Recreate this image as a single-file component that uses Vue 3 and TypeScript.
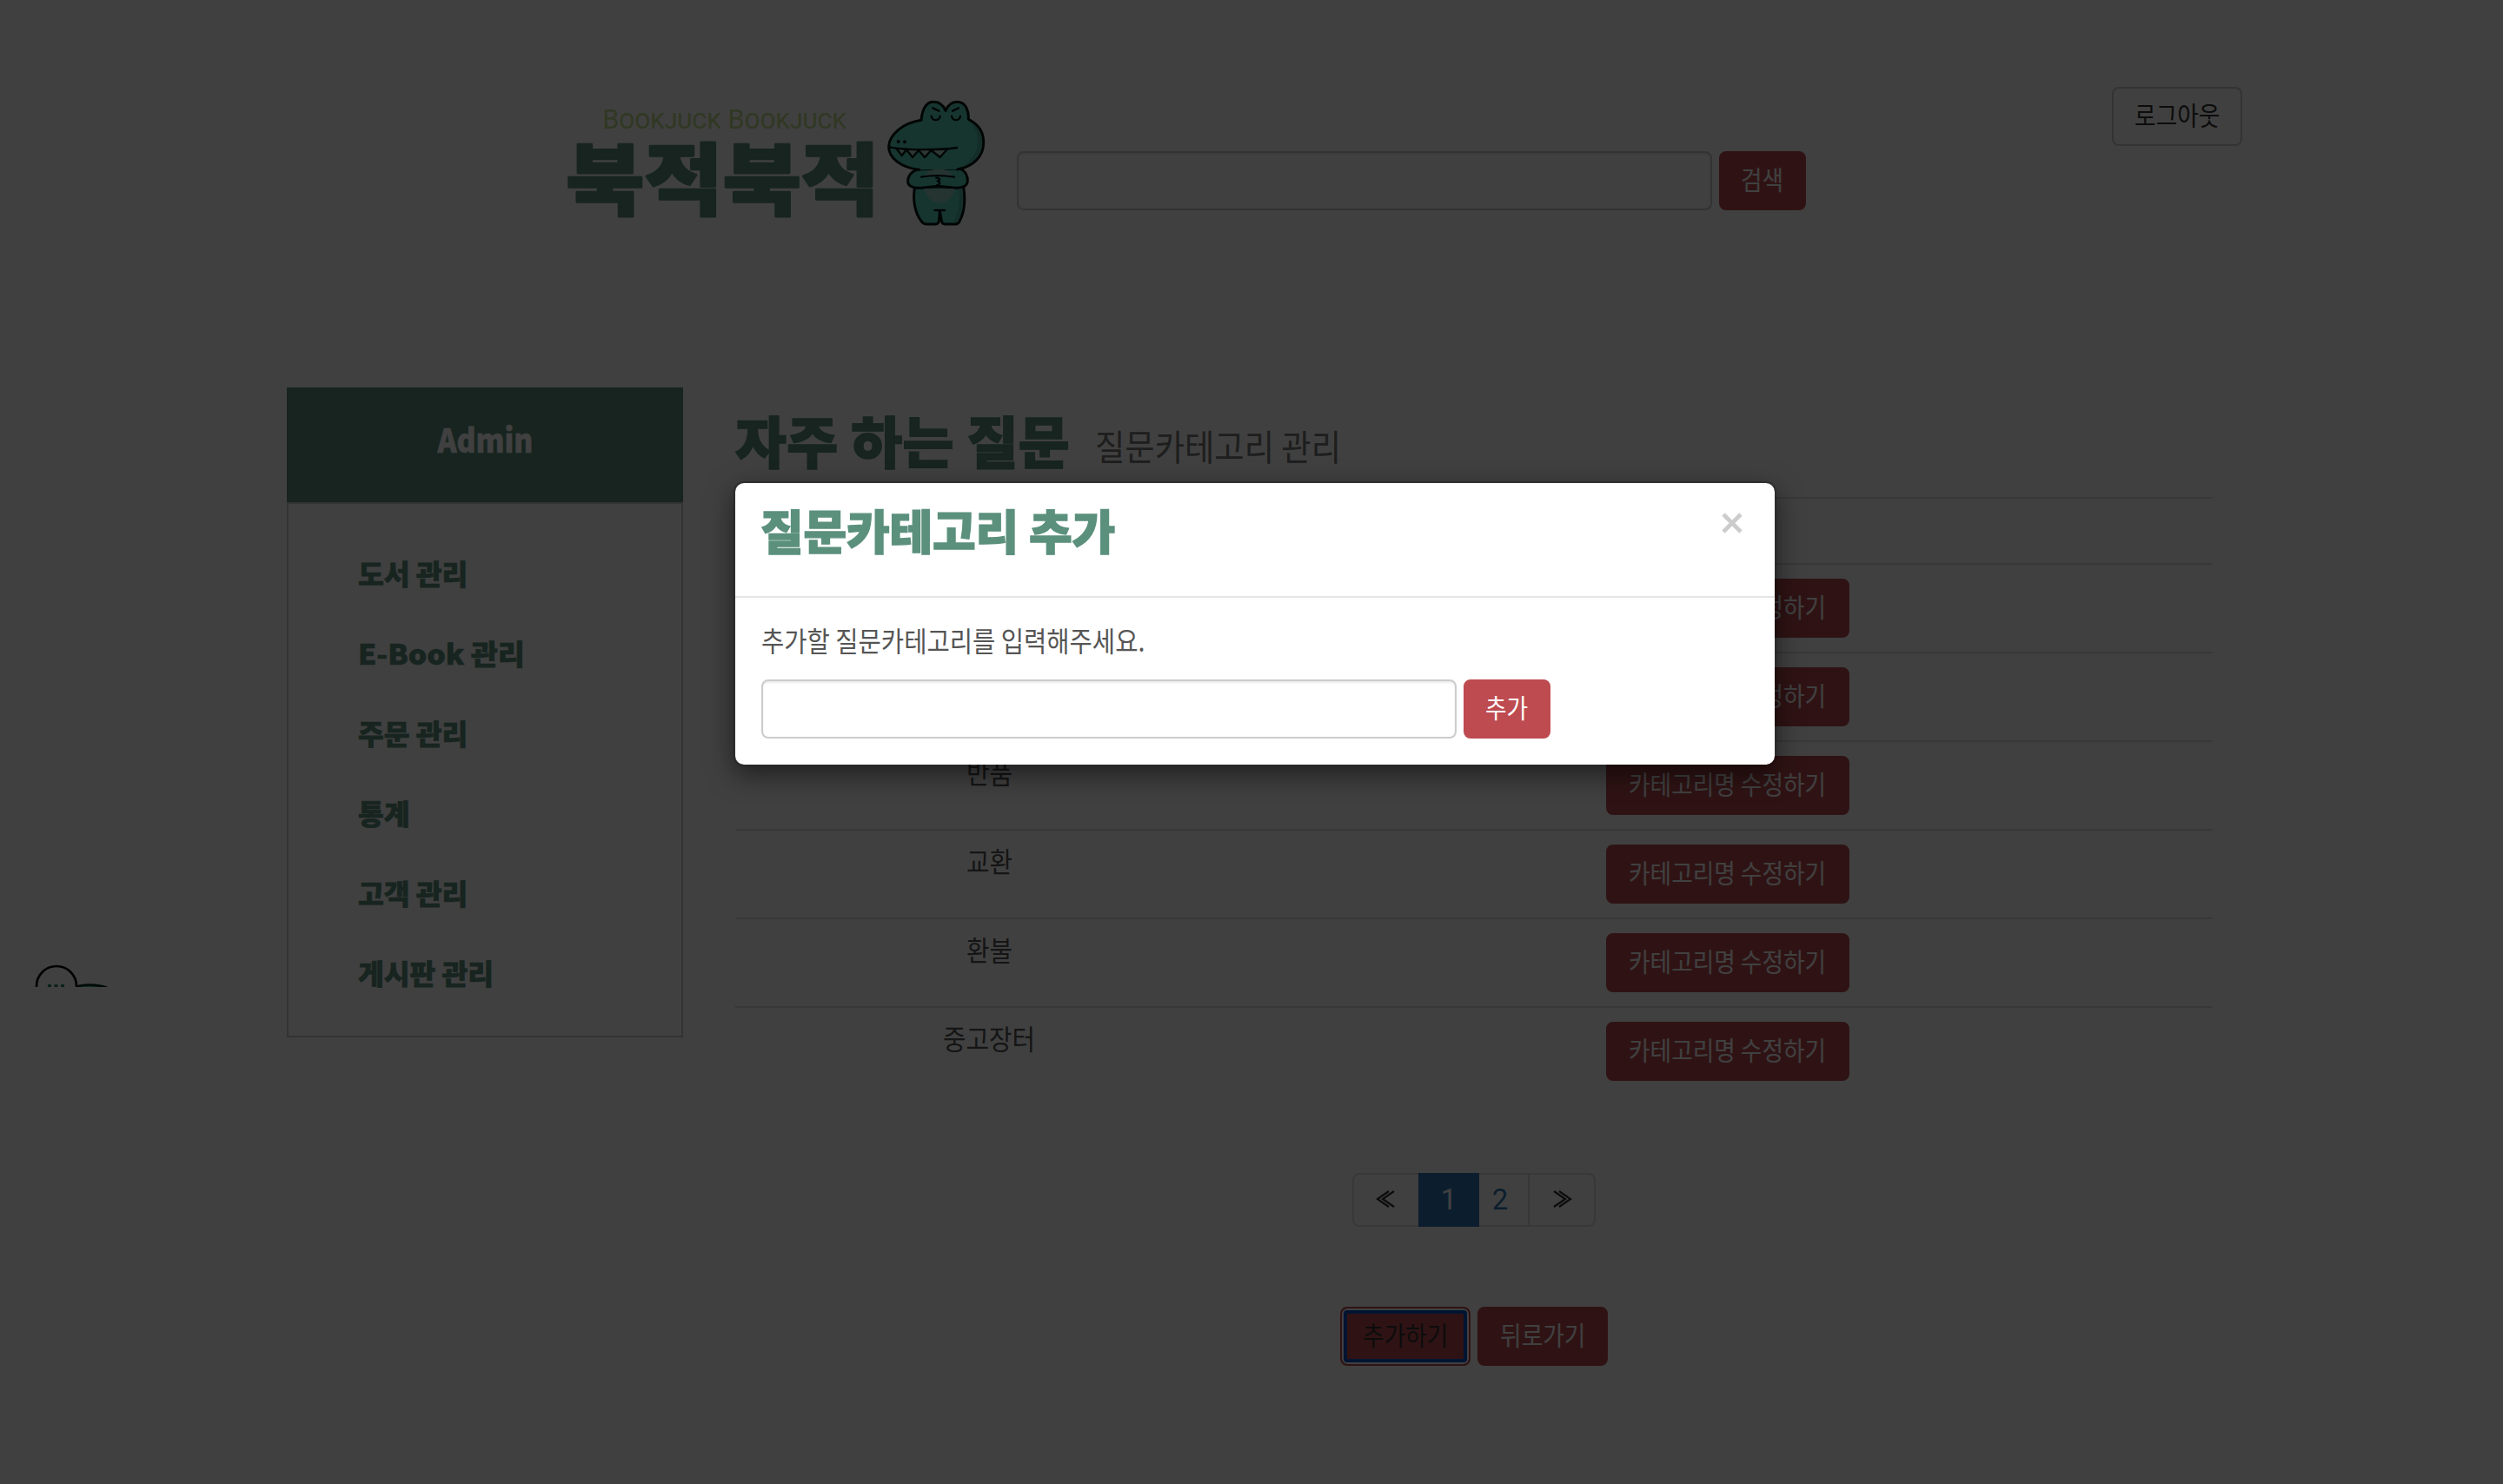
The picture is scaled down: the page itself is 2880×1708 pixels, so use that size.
<script setup lang="ts">
interface Row {
  id: number
  name: string
}

const menu: string[] = ['도서 관리', 'E-Book 관리', '주문 관리', '통계', '고객 관리', '게시판 관리']

const rows: Row[] = [
  { id: 1, name: '' },
  { id: 2, name: '' },
  { id: 3, name: '반품' },
  { id: 4, name: '교환' },
  { id: 5, name: '환불' },
  { id: 6, name: '중고장터' },
]
</script>

<template>
  <div class="page">
    <header class="top">
      <svg class="logo" viewBox="0 0 1560 540" aria-hidden="true">
        <text class="logo-en" x="160" y="143" textLength="842" lengthAdjust="spacingAndGlyphs">Bookjuck Bookjuck</text>
        <text class="logo-ko" x="34" y="421" textLength="1082" lengthAdjust="spacingAndGlyphs">북적북적</text>
        <g stroke="#001410" stroke-width="9" stroke-linecap="round" stroke-linejoin="round">
          <path fill="#5ad4bc" d="M1238 345C1230 385 1236 440 1266 470Q1270 474 1280 474H1310Q1320 474 1321 462L1324 428L1330 462Q1331 474 1342 474H1375Q1386 474 1391 466C1412 430 1412 385 1406 345Z" />
          <path fill="#5ad4bc" d="M1252 284C1225 290 1212 310 1214 330C1217 348 1245 352 1275 347L1318 343L1362 347C1395 352 1418 346 1420 326C1421 305 1410 290 1394 282Z" />
          <path fill="#5ad4bc" d="M1252 286C1190 278 1146 245 1148 205C1150 165 1195 125 1260 115C1264 70 1282 50 1304 52C1325 52 1337 66 1344 82C1352 63 1366 52 1384 52C1410 52 1424 75 1423 112C1460 130 1476 160 1475 195C1474 240 1440 275 1385 285" />
        </g>
        <path fill="#4fb5a0" d="M1425 120C1460 138 1471 166 1470 195C1469 233 1442 262 1405 275C1440 248 1455 218 1455 185C1455 160 1445 138 1425 120Z" />
        <path fill="#4fb5a0" d="M1402 352C1406 390 1402 435 1385 468H1372C1390 430 1394 390 1390 352Z" />
        <path fill="#98cfc2" d="M1272 308C1285 275 1355 275 1370 308ZM1270 352H1375C1370 382 1350 399 1322 399C1295 399 1276 380 1270 352Z" />
        <path fill="#b4ded2" d="M1175 214L1193 237L1209 217L1230 243L1251 219L1272 243L1294 219L1325 243L1350 215Z" />
        <g fill="none" stroke="#001410" stroke-width="7" stroke-linecap="round" stroke-linejoin="round">
          <path d="M1150 208C1210 220 1330 218 1383 210" />
          <path d="M1175 214L1193 237L1209 217L1230 243L1251 219L1272 243L1294 219L1325 243L1350 215" />
          <path d="M1300 73L1321 83M1389 73L1368 83M1295 101C1298 119 1322 119 1325 101M1365 101C1368 119 1392 119 1395 101" />
          <path d="M1260 311C1290 306 1340 306 1374 311M1312 314C1326 314 1326 324 1316 325C1328 328 1324 338 1314 340L1320 346M1306 426H1341" />
        </g>
        <circle cx="1181" cy="189" r="6" fill="#001410" />
        <circle cx="1203" cy="190" r="6" fill="#001410" />
      </svg>
      <form class="search" @submit.prevent>
        <input class="field" type="text" />
        <button class="btn narrow"><span class="t">검색</span></button>
      </form>
      <button class="btn plain logout"><span class="t">로그아웃</span></button>
    </header>

    <div class="columns">
      <aside class="side">
        <h2 class="side-head"><span>Admin</span></h2>
        <ul class="menu">
          <li v-for="item in menu" :key="item"><span :class="{ latin: item.startsWith('E') }">{{ item }}</span></li>
        </ul>
      </aside>

      <main class="main">
        <h1 class="title"><span class="title-main">자주 하는 질문</span><small>질문카테고리 관리</small></h1>
        <div class="thead"></div>
        <div v-for="row in rows" :key="row.id" class="row">
          <div class="name"><span>{{ row.name }}</span></div>
          <div class="action"><button class="btn wide"><span class="t">카테고리명 수정하기</span></button></div>
        </div>

        <nav class="pager">
          <a class="arrow">
            <svg viewBox="0 0 22 20"><path d="M14 1L1 10L14 19M20 1L7 10L20 19" /></svg>
          </a>
          <a class="num active">1</a>
          <a class="num two">2</a>
          <a class="arrow last">
            <svg viewBox="0 0 22 20"><path d="M2 1L15 10L2 19M8 1L21 10L8 19" /></svg>
          </a>
        </nav>

        <div class="bottom">
          <button class="btn mid focused"><span class="t">추가하기</span></button>
          <button class="btn mid"><span class="t">뒤로가기</span></button>
        </div>
      </main>
    </div>

    <svg class="chat" viewBox="0 0 90 26" aria-hidden="true">
      <path d="M46 26C56 22.500 72 22.500 84 27H46Z" fill="#5ad4bc" stroke="#00281f" stroke-width="2.4" />
      <circle cx="25" cy="25" r="23" fill="#fff" stroke="#000" stroke-width="2.6" />
      <path d="M15 23h4v3h-4zM22.500 23h4v3h-4zM30 23h4v3h-4z" fill="#2b7f70" />
    </svg>

    <div class="backdrop"></div>
    <section class="modal">
      <header class="modal-head">
        <h2>질문카테고리 추가</h2>
        <svg class="close" viewBox="0 0 24 24"><path d="M2 2L22 22M22 2L2 22" /></svg>
      </header>
      <div class="modal-body">
        <p><span>추가할 질문카테고리를 입력해주세요.</span></p>
        <form class="inline" @submit.prevent>
          <input class="field" type="text" />
          <button class="btn narrow"><span class="t">추가</span></button>
        </form>
      </div>
    </section>
  </div>
</template>

<style>
body {
  margin: 0;
}
</style>

<style scoped>
* {
  box-sizing: border-box;
}
.page {
  position: relative;
  width: 2880px;
  height: 1708px;
  overflow: hidden;
  background: #fff;
  color: #555;
  font-family: 'Noto Sans CJK KR', 'Noto Sans', sans-serif;
}
.top {
  display: flex;
  align-items: flex-start;
  height: 446px;
  padding: 100px 300px 0 640px;
}
.logo {
  width: 520px;
  height: 180px;
  flex: none;
}
.logo-en {
  font-family: Roboto, sans-serif;
  font-size: 94px;
  font-variant: small-caps;
  font-weight: 400;
  fill: #bfe08c;
}
.logo-ko {
  font-size: 270px;
  font-weight: 900;
  fill: #5b907d;
  stroke: #5b907d;
  stroke-width: 8px;
  stroke-linejoin: round;
}
.search {
  display: flex;
  gap: 8px;
  margin: 74px 0 0 10px;
}
.logout {
  margin-left: auto;
}
.field {
  width: 800px;
  height: 68px;
  padding: 0 24px;
  border: 2px solid #ccc;
  border-radius: 8px;
  background: #fff;
  box-shadow: inset 0 2px 2px rgba(0, 0, 0, 0.075);
  outline: none;
}
.btn {
  display: flex;
  justify-content: center;
  align-items: center;
  height: 68px;
  padding: 0 0 6px;
  border: 2px solid #bd4b50;
  border-radius: 8px;
  background: #bd4b50;
  color: #fff;
  font-family: inherit;
  font-size: 30px;
  line-height: 44px;
  white-space: nowrap;
}
.t {
  display: inline-block;
  transform: scaleX(0.89);
}
.narrow {
  width: 100px;
}
.mid {
  width: 150px;
}
.wide {
  width: 280px;
}
.plain {
  width: 150px;
  border-color: #ccc;
  background: #fff;
  color: #333;
}
.columns {
  display: flex;
  gap: 60px;
  padding-left: 330px;
}
.side {
  width: 456px;
}
.side-head {
  display: flex;
  justify-content: center;
  height: 132px;
  margin: 0;
  padding-top: 31px;
  background: #5b907d;
  color: #fff;
  font-size: 38px;
  font-weight: 900;
  line-height: 56px;
}
.side-head span {
  transform: scaleX(0.88);
  -webkit-text-stroke: 0.6px #fff;
}
.menu {
  height: 616px;
  margin: 0;
  padding: 33px 0 0 80px;
  border: 2px solid #ccc;
  list-style: none;
  color: #5b907d;
  font-size: 32px;
  font-weight: 900;
  line-height: 92px;
  -webkit-text-stroke: 0.7px #5b907d;
}
.menu span {
  display: inline-block;
  transform: scaleX(1.01);
  transform-origin: left;
}
.menu .latin {
  transform: scaleX(1.055);
}
.main {
  width: 1700px;
}
.title {
  display: flex;
  height: 126px;
  margin: 0;
  font-size: 64px;
  line-height: 126px;
  white-space: nowrap;
}
.title-main {
  width: 414px;
  color: #5b907d;
  font-weight: 900;
  line-height: 119px;
  letter-spacing: 0.3px;
  -webkit-text-stroke: 1.6px #5b907d;
}
.title small {
  color: #777;
  font-size: 41px;
  font-weight: 400;
  line-height: 132px;
  transform: scaleX(0.91);
  transform-origin: left;
}
.thead {
  height: 76px;
  border-top: 2px solid #ddd;
}
.row {
  display: flex;
  height: 102px;
  padding-top: 16px;
  border-top: 2px solid #ddd;
}
.name {
  width: 584px;
  color: #555;
  font-size: 32px;
  line-height: 37px;
  text-align: center;
}
.name span {
  display: inline-block;
  transform: scaleX(0.9);
}
.action {
  display: flex;
  flex: 1;
  justify-content: center;
}
.pager {
  display: flex;
  width: 280px;
  height: 62px;
  margin: 90px auto 0;
  border: 2px solid #ddd;
  border-radius: 8px;
  line-height: 58px;
}
.arrow {
  display: flex;
  flex: none;
  justify-content: center;
  align-items: center;
  width: 74px;
}
.arrow svg {
  width: 22px;
  height: 20px;
  margin-bottom: 2px;
  overflow: visible;
  fill: none;
  stroke: #333;
  stroke-width: 2.2;
}
.num {
  flex: none;
  width: 56px;
  color: #337ab7;
  font-family: Roboto, sans-serif;
  font-size: 33px;
  text-align: center;
}
.active {
  width: 70px;
  height: 62px;
  margin-top: -2px;
  background: #337ab7;
  color: #fff;
  line-height: 62px;
}
.two {
  padding-right: 8px;
}
.last {
  width: 76px;
  border-left: 2px solid #ddd;
}
.bottom {
  display: flex;
  justify-content: center;
  gap: 8px;
  margin-top: 92px;
}
.focused {
  box-shadow: inset 0 0 0 2px #fff, inset 0 0 0 6px #0050c8;
  color: #333;
}
.chat {
  position: absolute;
  left: 40px;
  top: 1110px;
  width: 90px;
  height: 26px;
  overflow: hidden;
}
.backdrop {
  position: absolute;
  inset: 0;
  background: rgba(0, 0, 0, 0.75);
}
.modal {
  position: absolute;
  left: 844px;
  top: 554px;
  width: 1200px;
  height: 328px;
  border: 2px solid rgba(0, 0, 0, 0.2);
  border-radius: 12px;
  background: #fff;
  background-clip: padding-box;
  box-shadow: 0 10px 30px rgba(0, 0, 0, 0.5);
}
.modal-head {
  display: flex;
  justify-content: space-between;
  height: 132px;
  padding: 0 37px 0 29px;
  border-bottom: 2px solid #e5e5e5;
}
.modal-head h2 {
  margin: 0;
  color: #5b907d;
  font-size: 54px;
  font-weight: 900;
  letter-spacing: -0.2px;
  line-height: 107px;
  -webkit-text-stroke: 1.4px #5b907d;
}
.close {
  width: 24px;
  height: 24px;
  margin-top: 34px;
  fill: none;
  stroke: #ccc;
  stroke-width: 4.6;
}
.modal-body {
  padding: 25px 30px 0;
}
.modal-body p {
  height: 69px;
  margin: 0;
  font-size: 32px;
  line-height: 46px;
}
.modal-body p span {
  display: inline-block;
  transform: scaleX(0.893);
  transform-origin: left;
}
.inline {
  display: flex;
  gap: 8px;
}
</style>
